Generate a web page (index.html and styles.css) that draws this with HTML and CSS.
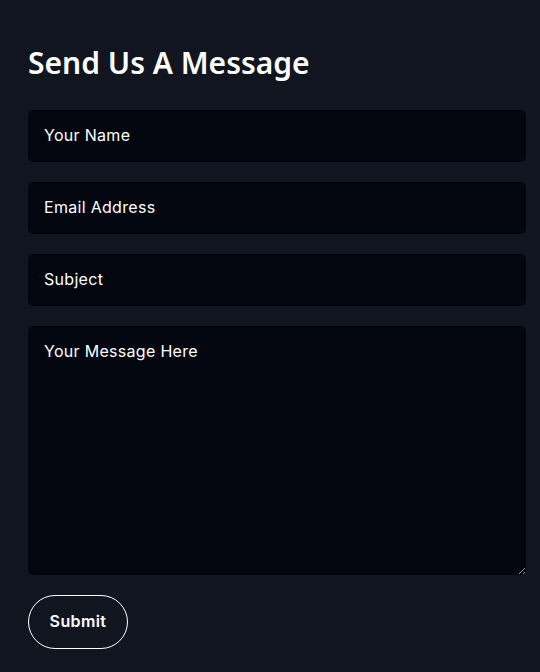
FILE: index.html
```html
<!DOCTYPE html>
<html lang="en">

<head>
    <meta charset="UTF-8">
    <meta name="viewport" content="width=device-width, initial-scale=1.0">
    <title>Contact</title>
    <link rel="stylesheet" href="styles.css">
</head>

<body>

    <div class="contact">
        <h2>Send Us A Message</h2>

        <form class="contact-form">
            <input type="text" placeholder="Your Name">
            <input type="email" placeholder="Email Address">
            <input type="text" placeholder="Subject">
            <textarea placeholder="Your Message Here"></textarea>
            <div>
                <button type="submit">Submit</button>
            </div>
        </form>
    </div>

</body>

</html>
```

FILE: styles.css
```css
body {
    margin: 0;
    padding: 0;
    background-color: #111520;
    color: #fff;
    font-family: 'Inter', sans-serif;
}

.contact {
    padding: 40px 14px 23px 28px;
}

h2 {
    font-family: 'Noto Sans', sans-serif;
    font-size: 30px;
    font-weight: 600;
    line-height: 46px;
    margin: 0 0 24px;
}

.contact-form {
    display: flex;
    flex-direction: column;
    gap: 20px;
}

input,
textarea {
    font-family: 'Inter', sans-serif;
    font-size: 16px;
    letter-spacing: 0.3px;
    color: #fff;
    background-color: #03060f;
    border: none;
    border-radius: 5px;
    padding: 0 16px 2px;
    outline: none;
    box-sizing: border-box;
    width: 100%;
}

input {
    height: 52px;
}

textarea {
    height: 249px;
    padding-top: 14px;
    line-height: 22px;
}

::placeholder {
    color: #fff;
    opacity: 1;
}

button {
    font-family: 'Inter', sans-serif;
    font-size: 16px;
    font-weight: 600;
    letter-spacing: 0.4px;
    color: #fff;
    background: transparent;
    border: 1px solid #fff;
    border-radius: 27px;
    width: 100px;
    height: 54px;
    padding: 0 0 2px;
    cursor: pointer;
}
```
